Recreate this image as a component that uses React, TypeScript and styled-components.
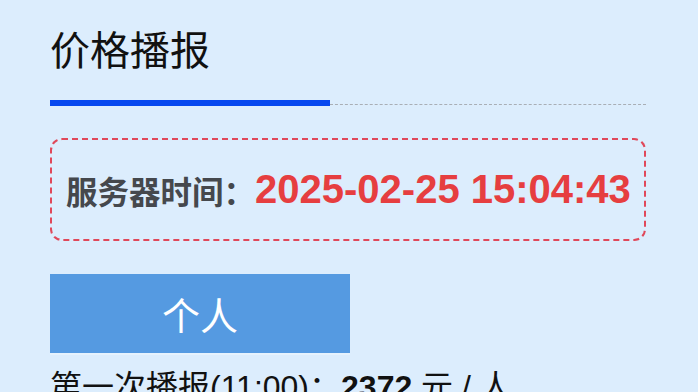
import styled, { createGlobalStyle } from "styled-components";

const GlobalStyle = createGlobalStyle`
  html, body {
    margin: 0;
    padding: 0;
    background: #dcedfd;
  }
  body {
    font-family: "Liberation Sans", "Noto Sans CJK SC", sans-serif;
    overflow: hidden;
  }
`;

const Page = styled.div`
  padding: 24px 52px 0 50px;
  height: 392px;
  box-sizing: border-box;
`;

const Title = styled.h1`
  margin: 0;
  font-family: "Noto Sans CJK SC", sans-serif;
  font-size: 40px;
  font-weight: 400;
  line-height: 48px;
  color: #111;
`;

const TabTrack = styled.div`
  display: flex;
  align-items: flex-end;
  margin-top: 28px;
`;

const ActiveBar = styled.div`
  width: 280px;
  height: 6px;
  background: #0748ef;
`;

const RestLine = styled.div`
  flex: 1;
  border-bottom: 1px dashed #a9aeb5;
  margin-bottom: 1px;
`;

const TimeBox = styled.div`
  display: flex;
  align-items: center;
  height: 103px;
  box-sizing: border-box;
  margin-top: 32px;
  padding: 0 12px 0 14px;
  border: 2px dashed #e0485a;
  border-radius: 12px;
  white-space: nowrap;
`;

const TimeLabel = styled.span`
  flex-shrink: 0;
  font-family: "Noto Sans CJK SC", sans-serif;
  font-size: 31.5px;
  font-weight: 700;
  color: #45484d;
`;

const TimeValue = styled.span`
  flex-shrink: 0;
  font-family: "Liberation Sans", sans-serif;
  font-size: 40px;
  font-weight: 700;
  color: #e63e40;
`;

const TabButton = styled.button`
  display: block;
  width: 300px;
  height: 79px;
  margin-top: 33px;
  border: none;
  padding: 0;
  background: #559ae1;
  color: #fff;
  font-family: "Noto Sans CJK SC", sans-serif;
  font-size: 38px;
  font-weight: 400;
  box-shadow: 0 2px 0 #e6f2fd;
`;

const PriceLine = styled.p`
  margin: 14px 0 0;
  font-family: "Liberation Sans", "Noto Sans CJK SC", sans-serif;
  font-size: 32px;
  line-height: 40px;
  color: #111;
  white-space: nowrap;
`;

const Price = styled.b`
  font-weight: 700;
`;

export default function App() {
  return (
    <>
      <GlobalStyle />
      <Page>
        <Title>价格播报</Title>
        <TabTrack>
          <ActiveBar />
          <RestLine />
        </TabTrack>
        <TimeBox>
          <TimeLabel>服务器时间：</TimeLabel>
          <TimeValue>2025-02-25 15:04:43</TimeValue>
        </TimeBox>
        <TabButton>个人</TabButton>
        <PriceLine>
          第一次播报(11:00)：<Price>2372</Price> 元 / 人
        </PriceLine>
      </Page>
    </>
  );
}
